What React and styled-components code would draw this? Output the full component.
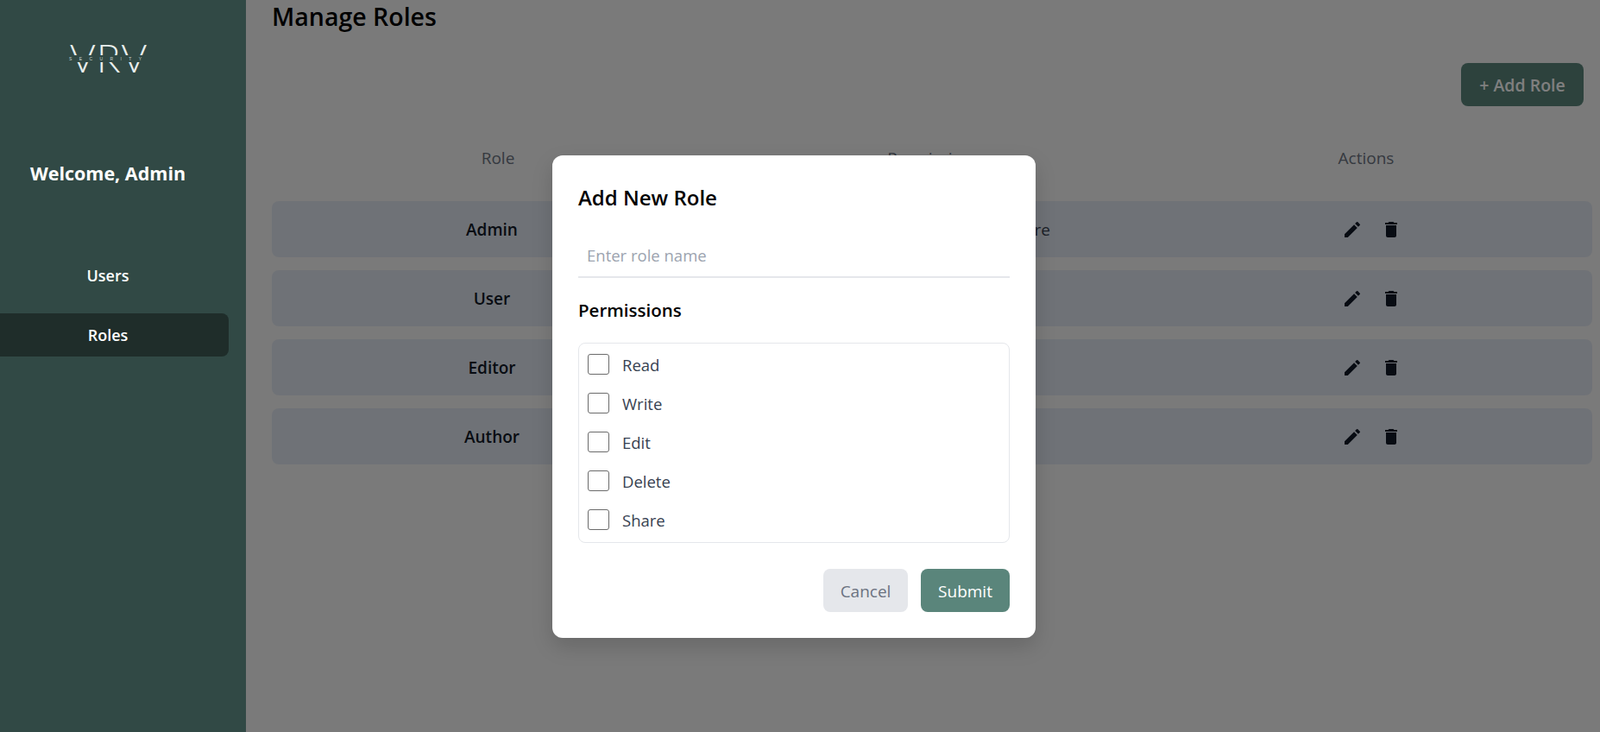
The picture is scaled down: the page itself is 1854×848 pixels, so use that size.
import React from 'react';
import styled, { createGlobalStyle } from 'styled-components';
import { MdEdit, MdDelete } from 'react-icons/md';

const GlobalStyle = createGlobalStyle`
  html, body {
    margin: 0;
    padding: 0;
    height: 100%;
    overflow: hidden;
    background: #f5f5f5;
    font-family: "Open Sans", "Noto Sans", "Liberation Sans", sans-serif;
  }
  * { box-sizing: border-box; }
`;

const Page = styled.div`
  position: relative;
  display: flex;
  width: 1854px;
  height: 848px;
  overflow: hidden;
`;

//================ Sidebar ================
const Sidebar = styled.aside`
  position: relative;
  z-index: 20;
  flex: 0 0 285px;
  display: flex;
  flex-direction: column;
  align-items: stretch;
  background: #314945;
  color: #fff;
  padding-top: 48px;
`;

const Logo = styled.div`
  position: relative;
  align-self: flex-start;
  width: 92px;
  height: 38px;
  margin-left: 80px;
  display: flex;
  justify-content: center;
  align-items: center;
`;

const LogoMark = styled.span`
  font-family: "Lato", "Open Sans", sans-serif;
  font-weight: 300;
  font-size: 46px;
  line-height: 38px;
  letter-spacing: 1px;
  color: #e8eeec;
`;

const LogoBand = styled.span`
  position: absolute;
  left: 0;
  right: 0;
  top: 16px;
  height: 8px;
  background: #314945;
  color: #c8d2cf;
  font-family: "Liberation Sans", sans-serif;
  font-size: 5px;
  line-height: 8px;
  letter-spacing: 8.4px;
  white-space: nowrap;
  text-align: left;
`;

const Welcome = styled.h2`
  margin: 100px 0 0;
  width: 250px;
  text-align: center;
  font-size: 21.5px;
  line-height: 30px;
  font-weight: 700;
`;

const Nav = styled.nav`
  display: flex;
  flex-direction: column;
  margin-top: 78px;
`;

const NavItem = styled.a`
  display: flex;
  align-items: center;
  justify-content: center;
  width: 265px;
  height: 50px;
  margin-bottom: 19px;
  padding-right: 15px;
  font-size: 18px;
  font-weight: 600;
  color: #fff;
  border-radius: 0 8px 8px 0;
  background: ${(p) => (p.$active ? '#1f2d2a' : 'transparent')};
`;

//================ Main content ================
const Main = styled.main`
  flex: 1;
  min-width: 0;
  padding: 0 9px 0 30px;
`;

const Title = styled.h1`
  margin: 0;
  font-size: 28.5px;
  line-height: 38px;
  font-weight: 600;
  color: #000;
`;

const Toolbar = styled.div`
  display: flex;
  justify-content: flex-end;
  padding-right: 10px;
  margin-top: 35px;
`;

const AddButton = styled.button`
  height: 50px;
  width: 142px;
  padding: 0;
  border: 0;
  border-radius: 8px;
  background: #5a857b;
  color: #fff;
  font-family: inherit;
  font-size: 19.5px;
  font-weight: 600;
`;

const HeaderRow = styled.div`
  display: grid;
  grid-template-columns: 524px 486px 516px;
  margin-top: 43px;
  height: 34px;
  align-items: center;
  text-align: center;
  font-size: 19px;
  color: #6b7280;
`;

const Rows = styled.div`
  display: flex;
  flex-direction: column;
  gap: 15px;
  margin-top: 33px;
`;

const Row = styled.div`
  display: grid;
  grid-template-columns: 510px 510px 1fr;
  align-items: center;
  height: 65px;
  padding-top: 1px;
  border-radius: 8px;
  background: #dfe5ee;
  text-align: center;
  font-size: 19px;
  color: #111827;
`;

const RoleName = styled.span`
  font-weight: 600;
`;

const Perms = styled.span`
  color: #374151;
`;

const Actions = styled.div`
  display: flex;
  justify-content: center;
  gap: 21px;
  padding-right: 2px;
  margin-top: -1px;
  font-size: 24px;
  color: #111827;

  svg { display: block; }
`;

//================ Modal ================
const Overlay = styled.div`
  position: absolute;
  inset: 0;
  z-index: 10;
  display: flex;
  justify-content: center;
  align-items: flex-start;
  padding: 180px 14px 0 0;
  background: rgba(0, 0, 0, 0.5);
`;

const Modal = styled.form`
  width: 560px;
  height: 559px;
  padding: 30px;
  border-radius: 12px;
  background: #fff;
  box-shadow: 0 10px 25px rgba(0, 0, 0, 0.15);
`;

const ModalTitle = styled.h2`
  margin: 0;
  font-size: 24px;
  line-height: 38px;
  font-weight: 600;
  color: #000;
`;

const NameInput = styled.input`
  display: block;
  width: 100%;
  height: 52px;
  margin-top: 22px;
  padding: 0 10px;
  border: 0;
  border-bottom: 2px solid #e5e7eb;
  outline: none;
  font-family: inherit;
  font-size: 18.5px;
  color: #111827;

  &::placeholder { color: #9ca3af; opacity: 1; }
`;

const SectionTitle = styled.h3`
  margin: 21px 0 0;
  font-size: 20.5px;
  line-height: 32px;
  font-weight: 600;
  color: #000;
`;

const PermList = styled.div`
  display: flex;
  flex-direction: column;
  gap: 21px;
  margin-top: 22px;
  height: 232px;
  padding: 12px 10px 0;
  border: 1px solid #e5e7eb;
  border-radius: 8px;
`;

const PermRow = styled.label`
  display: flex;
  align-items: center;
  gap: 15px;
  height: 24px;
  font-size: 18.5px;
  color: #374151;
`;

const Check = styled.span`
  flex: 0 0 25px;
  width: 25px;
  height: 24px;
  border: 1px solid #6b6b6b;
  border-radius: 3px;
  background: #fff;
`;

const Footer = styled.div`
  display: flex;
  justify-content: flex-end;
  gap: 15px;
  margin-top: 30px;
`;

const ModalButton = styled.button`
  height: 50px;
  width: ${(p) => (p.$primary ? '103px' : '98px')};
  padding: 1px 0 0;
  border: 0;
  border-radius: 8px;
  background: ${(p) => (p.$primary ? '#5a857b' : '#e5e7eb')};
  color: ${(p) => (p.$primary ? '#fff' : '#6b7280')};
  font-family: inherit;
  font-size: 19px;
`;

const roles = [
  { name: 'Admin', perms: 'Read, Write, Edit, Delete, Share' },
  { name: 'User', perms: 'Read' },
  { name: 'Editor', perms: 'Read, Edit' },
  { name: 'Author', perms: 'Read, Write' },
];

const permissionNames = ['Read', 'Write', 'Edit', 'Delete', 'Share'];

export default function App() {
  return (
    <Page>
      <GlobalStyle />
      <Sidebar>
        <Logo>
          <LogoMark>VRV</LogoMark>
          <LogoBand>SECURITY</LogoBand>
        </Logo>
        <Welcome>Welcome, Admin</Welcome>
        <Nav>
          <NavItem>Users</NavItem>
          <NavItem $active>Roles</NavItem>
        </Nav>
      </Sidebar>

      <Main>
        <Title>Manage Roles</Title>
        <Toolbar>
          <AddButton type="button">+ Add Role</AddButton>
        </Toolbar>
        <HeaderRow>
          <span>Role</span>
          <span>Permissions</span>
          <span>Actions</span>
        </HeaderRow>
        <Rows>
          {roles.map((role) => (
            <Row key={role.name}>
              <RoleName>{role.name}</RoleName>
              <Perms>{role.perms}</Perms>
              <Actions>
                <MdEdit />
                <MdDelete />
              </Actions>
            </Row>
          ))}
        </Rows>
      </Main>

      <Overlay>
        <Modal>
          <ModalTitle>Add New Role</ModalTitle>
          <NameInput placeholder="Enter role name" />
          <SectionTitle>Permissions</SectionTitle>
          <PermList>
            {permissionNames.map((name) => (
              <PermRow key={name}>
                <Check />
                {name}
              </PermRow>
            ))}
          </PermList>
          <Footer>
            <ModalButton type="button">Cancel</ModalButton>
            <ModalButton type="button" $primary>Submit</ModalButton>
          </Footer>
        </Modal>
      </Overlay>
    </Page>
  );
}
